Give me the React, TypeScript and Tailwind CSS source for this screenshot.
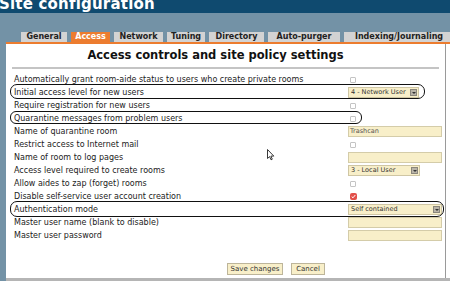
import React from "react";

const tabs = [
  { label: "General", w: "w-[46px]" },
  { label: "Access", w: "w-[39px]", active: true },
  { label: "Network", w: "w-[49px]" },
  { label: "Tuning", w: "w-[38px]" },
  { label: "Directory", w: "w-[55px]" },
  { label: "Auto-purger", w: "w-[72px]" },
  { label: "Indexing/Journaling", w: "w-[110px]" },
];

type Row = { label: string; kind: "check" | "checked" | "select" | "input"; value?: string; w?: string };

const rows: Row[] = [
  { label: "Automatically grant room-aide status to users who create private rooms", kind: "check" },
  { label: "Initial access level for new users", kind: "select", value: "4 - Network User", w: "w-[71px]" },
  { label: "Require registration for new users", kind: "check" },
  { label: "Quarantine messages from problem users", kind: "check" },
  { label: "Name of quarantine room", kind: "input", value: "Trashcan" },
  { label: "Restrict access to Internet mail", kind: "check" },
  { label: "Name of room to log pages", kind: "input" },
  { label: "Access level required to create rooms", kind: "select", value: "3 - Local User", w: "w-[72px]" },
  { label: "Allow aides to zap (forget) rooms", kind: "check" },
  { label: "Disable self-service user account creation", kind: "checked" },
  { label: "Authentication mode", kind: "select", value: "Self contained", w: "w-[94px]" },
  { label: "Master user name (blank to disable)", kind: "input" },
  { label: "Master user password", kind: "input" },
];

function Control({ row }: { row: Row }) {
  if (row.kind === "check")
    return <div className="ml-[2px] w-[6px] h-[6px] rounded-[1px] border border-[#c4c4c4] bg-white" />;
  if (row.kind === "checked")
    return (
      <div className="ml-[2px] w-[7px] h-[7px] rounded-[2px] bg-[#e2504a] flex items-center justify-center">
        <svg width="5" height="5" viewBox="0 0 5 5">
          <path d="M0.7 2.6 L2 3.8 L4.3 1" stroke="#fff" strokeWidth="1" fill="none" />
        </svg>
      </div>
    );
  if (row.kind === "select")
    return (
      <div className={`${row.w} h-[11px] flex items-center justify-between bg-[#f8efc9] border border-[#cfc6a4] pl-[2px] pr-[1px]`}>
        <span className="text-[6.5px] leading-none text-[#333] whitespace-nowrap">{row.value}</span>
        <span className="w-[7px] h-[7px] shrink-0 bg-[#b9b4a8] border border-[#8a867c] flex items-center justify-center">
          <span className="w-0 h-0 border-l-[2px] border-r-[2px] border-t-[2px] border-l-transparent border-r-transparent border-t-[#333]" />
        </span>
      </div>
    );
  return (
    <div className="w-[94px] h-[11px] flex items-center bg-[#f8efc9] border border-[#d4cca9] pl-[1px]">
      <span className="text-[6.5px] leading-none text-[#555]">{row.value ?? ""}</span>
    </div>
  );
}

export default function App() {
  return (
    <div
      className="relative w-[450px] h-[281px] overflow-hidden bg-[#7392a6]"
      style={{ fontFamily: '"DejaVu Sans", Verdana, sans-serif' }}
    >
      {/* Title bar */}
      <div className="h-[13px] bg-[#0f4a6f] overflow-hidden">
        <div className="text-white font-bold text-[15px] leading-none mt-[-3px] ml-[-1px] tracking-[0.2px] whitespace-nowrap">
          Site configuration
        </div>
      </div>

      {/* Tabs */}
      <div className="h-[29px] flex items-end pl-[21px] gap-[4px]">
        {tabs.map((t) => (
          <div
            key={t.label}
            className={`${t.w} shrink-0 h-[10px] flex items-center justify-center text-[8px] font-bold leading-none whitespace-nowrap ${
              t.active ? "bg-[#ec7c2f] text-white" : "bg-[#d3d3d3] text-[#222]"
            }`}
          >
            {t.label}
          </div>
        ))}
      </div>

      {/* Content */}
      <div className="ml-[6px] h-[239px] bg-white border-t-2 border-[#ec7c2f]">
        <div className="h-[234px] border-r border-[#9a9a9a] w-[440px] flex flex-col">
          <div className="h-[21px] pt-[3px] flex items-center justify-center text-[11.5px] font-bold text-[#111] pr-[20px]">
            Access controls and site policy settings
          </div>
          <div className="mx-[6px] mt-[2px] h-[2px] bg-[#c4c4c4]" />
          <div className="mt-[4px] flex flex-col">
            {rows.map((r) => (
              <div key={r.label} className="h-[13px] flex items-center">
                <div className="w-[342px] pl-[8px] text-[8px] text-[#222] leading-none whitespace-nowrap">
                  {r.label}
                </div>
                <Control row={r} />
              </div>
            ))}
          </div>
          <div className="mt-[21px] flex gap-[8px] pl-[221px]">
            <div className="w-[56px] h-[12px] bg-[#f8efc9] border border-[#bdb59a] flex items-center justify-center text-[7px] text-[#333] leading-none">
              Save changes
            </div>
            <div className="w-[34px] h-[12px] bg-[#f8efc9] border border-[#bdb59a] flex items-center justify-center text-[7px] text-[#333] leading-none">
              Cancel
            </div>
          </div>
        </div>
        <div className="h-[3px] bg-[#b5b5b5]" />
      </div>

      {/* Annotation ovals */}
      <div className="absolute left-[10px] top-[84px] w-[415px] h-[15px] rounded-[7px] border-[1.5px] border-[#111]" />
      <div className="absolute left-[10px] top-[111px] w-[352px] h-[13px] rounded-[6px] border-[1.5px] border-[#111]" />
      <div className="absolute left-[10px] top-[201px] w-[434px] h-[16px] rounded-[7px] border-[1.5px] border-[#111]" />

      {/* Mouse cursor */}
      <svg className="absolute left-[267px] top-[149px]" width="8" height="12" viewBox="0 0 8 12">
        <path d="M0.5 0.5 L0.5 9.5 L2.6 7.6 L4 10.8 L5.3 10.2 L3.9 7.1 L6.8 7.1 Z" fill="#fff" stroke="#222" strokeWidth="0.9" />
      </svg>
    </div>
  );
}
